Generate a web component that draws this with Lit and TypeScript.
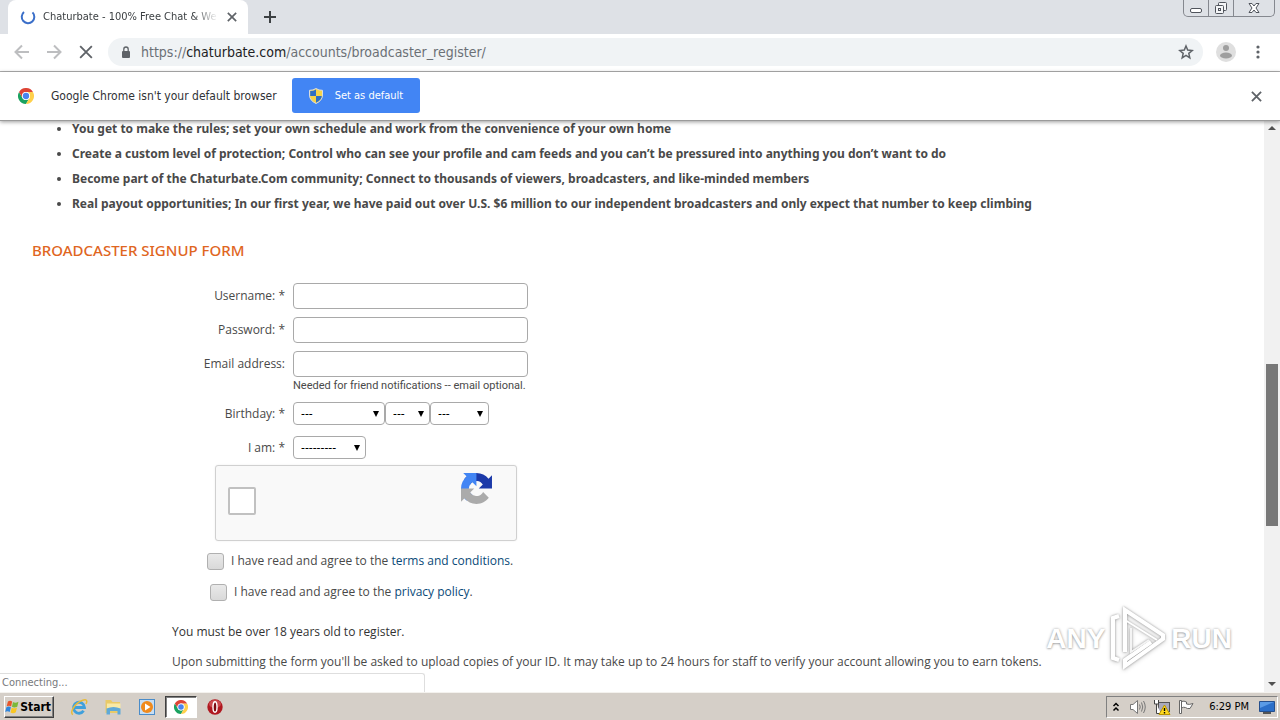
import { LitElement, html, css } from "lit";
import { customElement } from "lit/decorators.js";

const chromeLogo = (size: number) => html`
  <svg width=${size} height=${size} viewBox="0 0 48 48" aria-hidden="true">
    <path fill="#1aa260" d="M3.2 12A24 24 0 0 0 24 48L34.4 30A12 12 0 0 1 13.6 30Z" />
    <path fill="#ffd04b" d="M24 48A24 24 0 0 0 44.8 12H24A12 12 0 0 1 34.4 30Z" />
    <path fill="#de4435" d="M44.8 12A24 24 0 0 0 3.2 12L13.6 30A12 12 0 0 1 24 12Z" />
    <circle cx="24" cy="24" r="12" fill="#fff" />
    <circle cx="24" cy="24" r="9.5" fill="#4a84ee" />
  </svg>`;

const cross = (size: number, width: number) => html`
  <svg width=${size} height=${size} viewBox="0 0 12 12" fill="none" stroke="currentColor" stroke-width=${width} aria-hidden="true">
    <path d="M1 1L11 11M11 1L1 11" />
  </svg>`;

@customElement("browser-chrome")
class BrowserChrome extends LitElement {
  static styles = css`
    :host { display: block; font: 12px/16px "DejaVu Sans Condensed", "DejaVu Sans", sans-serif; color: #3c4043; }
    svg { display: block; }
    button { border: 0; background: none; padding: 0; margin: 0; color: inherit; font: inherit; display: grid; place-items: center; }
    .tabs { display: flex; height: 34px; padding-left: 8px; background: #dee1e6; }
    .tab { box-sizing: border-box; width: 240px; display: flex; align-items: center; background: #fff; border-radius: 8px 8px 0 0; padding: 0 10px 0 12px; }
    .title { flex: 1; min-width: 0; margin: 0 8px 0 7px; font-size: 11px; white-space: nowrap; overflow: hidden; -webkit-mask-image: linear-gradient(to right, #000 86%, transparent); mask-image: linear-gradient(to right, #000 86%, transparent); }
    .tab button { width: 12px; color: #5f6368; }
    .plus { width: 44px; color: #3c4043; }
    .window { display: flex; margin: 0 5px 0 auto; height: 16px; border: 1px solid #85888f; border-top: 0; border-radius: 0 0 5px 5px; }
    .window button { width: 24px; }
    .window button + button { width: 25px; border-left: 1px solid #85888f; }
    .window button:last-child { width: 41px; }
    .toolbar { display: flex; align-items: center; height: 36px; padding-bottom: 1px; border-bottom: 1px solid #b1b1b1; background: #fff; }
    .nav { display: flex; padding-left: 6px; }
    .nav button { width: 32px; color: #5f6368; }
    .nav button:disabled { color: #bdbec0; }
    .omnibox { flex: 1; display: flex; align-items: center; height: 28px; margin-left: 6px; padding: 0 9px 0 12px; border-radius: 14px; background: #f0f3f5; }
    .url { flex: 1; margin-left: 9px; font-size: 14px; color: #6b7075; outline: 0; white-space: nowrap; }
    .host { color: #202124; }
    .avatar { width: 46px; }
    .menu { width: 18px; margin-right: 13px; }
    .infobar { display: flex; align-items: center; height: 48px; padding: 0 18px; background: #fff; border-bottom: 1px solid #9a9a9a; box-shadow: 0 1px 4px #0006; position: relative; z-index: 2; color: #303236; }
    .msg { margin: 0 15px 0 17px; }
    .default { display: flex; align-items: center; gap: 12px; height: 35px; padding: 0 17px; background: #4285f4; color: #fff; border-radius: 3px; font-size: 11px; margin-bottom: 1px; }
    .close { margin-left: auto; color: #5f6368; }
  `;
  render() {
    return html`
      <div class="tabs">
        <div class="tab">
          <svg width="16" height="16" viewBox="0 0 16 16" fill="none" stroke="#3b6fc9" stroke-width="2"><path d="M4 3A6.3 6.3 0 1 0 12.5 3.4" /></svg>
          <span class="title">Chaturbate - 100% Free Chat &amp; We</span>
          <button aria-label="Close tab">${cross(10, 2)}</button>
        </div>
        <button class="plus" aria-label="New tab">
          <svg width="12" height="12" viewBox="0 0 12 12" stroke="currentColor" stroke-width="2"><path d="M6 0V12M0 6H12" /></svg>
        </button>
        <div class="window">
          <button aria-label="Minimize"><svg width="14" height="14" viewBox="0 0 14 14"><rect x="1.5" y="7.5" width="11" height="4" rx="1.5" fill="#fff" stroke="#50545c" /></svg></button>
          <button aria-label="Restore"><svg width="14" height="14" viewBox="0 0 14 14" fill="#f4f5f7" stroke="#50545c"><rect x="4.5" y="1.5" width="8" height="8" rx="1" /><rect x="1.5" y="4.5" width="8" height="8" rx="1" /><rect x="4.5" y="7.5" width="2" height="2" /></svg></button>
          <button aria-label="Close"><svg width="14" height="14" viewBox="0 0 14 14" fill="#fff" stroke="#50545c"><path d="M2 2.5H5L7 5L9 2.5H12L9 7L12 11.5H9L7 9L5 11.5H2L5 7Z" /></svg></button>
        </div>
      </div>
      <div class="toolbar">
        <div class="nav">
          <button disabled aria-label="Back"><svg width="16" height="16" viewBox="0 0 16 16" fill="none" stroke="currentColor" stroke-width="2"><path d="M15 8H2M8 1.5L1.5 8L8 14.5" /></svg></button>
          <button disabled aria-label="Forward"><svg width="16" height="16" viewBox="0 0 16 16" fill="none" stroke="currentColor" stroke-width="2"><path d="M1 8H14M8 1.5L14.5 8L8 14.5" /></svg></button>
          <button aria-label="Stop loading">${cross(14, 1.6)}</button>
        </div>
        <div class="omnibox">
          <svg width="12" height="12" viewBox="0 0 12 12"><rect x="2" y="5" width="8" height="7" rx="1" fill="#5f6368" /><path d="M3.8 5.5V3.2A2.2 2.2 0 0 1 8.2 3.2V5.5" fill="none" stroke="#5f6368" stroke-width="1.3" /></svg>
          <div class="url" role="textbox" aria-label="Address" contenteditable="true">https://<span class="host">chaturbate.com</span>/accounts/broadcaster_register/</div>
          <button aria-label="Bookmark this page"><svg width="16" height="16" viewBox="0 0 16 16" fill="none" stroke="#5f6368" stroke-width="1.5"><path d="M8 2L9.7 6.1L14.2 6.5L10.8 9.4L11.8 13.8L8 11.4L4.2 13.8L5.2 9.4L1.8 6.5L6.3 6.1Z" /></svg></button>
        </div>
        <button class="avatar" aria-label="Profile"><svg width="20" height="20" viewBox="0 0 20 20"><circle cx="10" cy="10" r="10" fill="#dfdfdf" /><circle cx="10" cy="6" r="3" fill="#9e9e9e" /><ellipse cx="10" cy="13.5" rx="6" ry="3" fill="#9e9e9e" /></svg></button>
        <button class="menu" aria-label="Menu"><svg width="4" height="14" viewBox="0 0 4 14" fill="#5f6368"><circle cx="2" cy="2" r="1.6" /><circle cx="2" cy="7" r="1.6" /><circle cx="2" cy="12" r="1.6" /></svg></button>
      </div>
      <div class="infobar">
        ${chromeLogo(16)}
        <span class="msg">Google Chrome isn't your default browser</span>
        <button class="default">
          <svg width="14" height="16" viewBox="0 0 14 16"><path d="M7 .5Q10 2.5 13.5 2.3V7Q13.5 12.5 7 15.5Q.5 12.5 .5 7V2.3Q4 2.5 7 .5Z" fill="#f6d449" stroke="#d9dde0" /><path d="M7 1.5V8H1.2V3Q4.5 3 7 1.5ZM7 8H12.8Q12.5 12 7 14.7Z" fill="#2f6fc4" /></svg>
          <span>Set as default</span>
        </button>
        <button class="close" aria-label="Dismiss">${cross(11, 2)}</button>
      </div>`;
  }
}

@customElement("signup-page")
class SignupPage extends LitElement {
  static styles = css`
    :host { display: flex; flex: 1; min-height: 0; overflow: hidden; position: relative; background: #fff; font: 12px/16px "Open Sans", "Noto Sans", sans-serif; color: #494949; }
    main { flex: 1; min-width: 0; overflow: hidden; padding-left: 32px; }
    ul { margin: -5px 0 0; padding: 0 0 0 40px; font: bold 12px/25px "Noto Sans", sans-serif; }
    li { white-space: nowrap; }
    h2 { margin: 24px 0 23px; font: 500 15px/20px "Noto Sans", sans-serif; color: #e0661f; }
    .row { display: grid; grid-template-columns: 253px 1fr; column-gap: 8px; align-items: center; margin-bottom: 8px; }
    .row > label { text-align: right; }
    .row > input { box-sizing: border-box; width: 235px; height: 26px; border: 1px solid #a9a9a9; border-radius: 4px; padding: 2px 6px; margin: 0; font: inherit; background: #fff; }
    .help { grid-column: 2; font: 11px/17px Roboto, sans-serif; }
    .selects { display: flex; }
    .pick { display: grid; align-items: center; }
    .pick::after { content: ""; grid-area: 1 / 1; justify-self: end; margin-right: 6px; border: 3px solid transparent; border-top: 6px solid #000; border-bottom: 0; pointer-events: none; }
    select { grid-area: 1 / 1; appearance: none; box-sizing: border-box; height: 23px; border: 1px solid #a9a9a9; border-radius: 4px; padding: 0 7px; margin: 0; background: #fff; color: #000; font: 12px/16px "DejaVu Sans Condensed", "DejaVu Sans", sans-serif; }
    .month { width: 92px; }
    .day { width: 45px; }
    .year { width: 59px; }
    .gender { width: 73px; }
    .row.last { margin: 11px 0 6px; }
    .captcha { box-sizing: border-box; width: 302px; height: 76px; margin-left: 183px; padding: 7px 24px 0 12px; display: flex; justify-content: space-between; background: #f9f9f9; border: 1px solid #d0d0d0; border-radius: 3px; box-shadow: 0 0 2px #00000014; }
    .captcha input { appearance: none; box-sizing: border-box; width: 28px; height: 28px; margin: 14px 0 0; border: 2px solid #c1c1c1; border-radius: 2px; background: #fff; }
    .agree { display: flex; align-items: center; gap: 7px; margin: 11px 0 0 175px; height: 18px; }
    .agree + .agree { margin: 13px 0 0 178px; }
    .agree input { appearance: none; box-sizing: border-box; width: 17px; height: 17px; margin: 0; border: 1px solid #b0b0b0; border-radius: 3px; background: linear-gradient(#e9e9e9, #d9d9d9); }
    a { color: #0a4a78; text-decoration: none; }
    p { margin: 14px 0 0 140px; white-space: nowrap; }
    .adult { margin-top: 23px; font-weight: 500; color: #333; }
    .scroll { width: 16px; display: flex; flex-direction: column; align-items: center; background: #f1f1f1; }
    .scroll svg { flex: none; display: block; }
    .above { flex: 226; }
    .thumb { flex: 162; width: 12px; background: #787878; }
    .below { flex: 149; }
    .status { position: absolute; left: 0; bottom: 0; box-sizing: border-box; width: 425px; height: 19px; padding-left: 2px; background: #fff; border: 1px solid #dedede; border-width: 1px 1px 0 0; border-radius: 0 3px 0 0; font: 11px/18px "DejaVu Sans Condensed", sans-serif; color: #77797c; }
    .mark { position: absolute; right: 48px; bottom: 20px; display: flex; align-items: center; gap: 4px; font: bold 28px/20px "Liberation Sans", sans-serif; color: #fff; text-shadow: 0 0 3px #0005, 0 1px 2px #0003; pointer-events: none; }
    .mark svg { display: block; filter: drop-shadow(0 0 1px #0005) drop-shadow(0 1px 2px #0003); }
  `;
  render() {
    const items = [
      "You get to make the rules; set your own schedule and work from the convenience of your own home",
      "Create a custom level of protection; Control who can see your profile and cam feeds and you can’t be pressured into anything you don’t want to do",
      "Become part of the Chaturbate.Com community; Connect to thousands of viewers, broadcasters, and like-minded members",
      "Real payout opportunities; In our first year, we have paid out over U.S. $6 million to our independent broadcasters and only expect that number to keep climbing",
    ];
    const pick = (name: string, label: string, dashes: string) => html`
      <span class="pick"><select class=${name} id=${name} aria-label=${label}><option>${dashes}</option></select></span>`;
    const arrow = (d: string) => html`<svg width="16" height="17" viewBox="0 0 16 17" aria-hidden="true"><path d=${d} fill="#505050" /></svg>`;
    return html`
      <main>
        <ul>${items.map((t) => html`<li>${t}</li>`)}</ul>
        <h2>BROADCASTER SIGNUP FORM</h2>
        <form>
          <div class="row"><label for="user">Username: *</label><input id="user" type="text" /></div>
          <div class="row"><label for="pass">Password: *</label><input id="pass" type="password" /></div>
          <div class="row"><label for="mail">Email address:</label><input id="mail" type="email" />
            <span class="help">Needed for friend notifications -- email optional.</span></div>
          <div class="row"><label for="month">Birthday: *</label>
            <div class="selects">${pick("month", "Month", "---")}${pick("day", "Day", "---")}${pick("year", "Year", "---")}</div></div>
          <div class="row last"><label for="gender">I am: *</label><div class="selects">${pick("gender", "I am", "---------")}</div></div>
          <div class="captcha">
            <input type="checkbox" aria-label="reCAPTCHA" />
            <svg width="31" height="31" viewBox="0 0 64 64" aria-hidden="true">
              <path fill="#1c3aa9" d="M64 31.955l-.033-1.37V4.687l-7.16 7.16C50.948 4.674 42.033.093 32.05.093c-10.4 0-19.622 4.96-25.458 12.64l11.736 11.86a15.55 15.55 0 0 1 4.754-5.334c2.05-1.6 4.952-2.906 8.968-2.906.485 0 .86.057 1.135.163 4.976.393 9.288 3.14 11.828 7.124l-8.307 8.307L64 31.953" />
              <path fill="#4285f4" d="M31.862.094l-1.37.033H4.594l7.16 7.16C4.58 13.147 0 22.06 0 32.046c0 10.4 4.96 19.622 12.64 25.458L24.5 45.768a15.55 15.55 0 0 1-5.334-4.754c-1.6-2.05-2.906-4.952-2.906-8.968 0-.485.057-.86.163-1.135.393-4.976 3.14-9.288 7.124-11.828l8.307 8.307L31.86.095" />
              <path fill="#ababab" d="M.001 32.045l.033 1.37v25.898l7.16-7.16c5.86 7.173 14.774 11.754 24.76 11.754 10.4 0 19.622-4.96 25.458-12.64l-11.736-11.86a15.55 15.55 0 0 1-4.754 5.334c-2.05 1.6-4.952 2.906-8.968 2.906-.485 0-.86-.057-1.135-.163-4.976-.393-9.288-3.14-11.828-7.124l8.307-8.307c-10.522.04-22.4.066-27.295-.005" />
            </svg>
          </div>
          <div class="agree"><input type="checkbox" id="terms" /><label for="terms">I have read and agree to the <a href="#terms">terms and conditions</a>.</label></div>
          <div class="agree"><input type="checkbox" id="privacy" /><label for="privacy">I have read and agree to the <a href="#privacy">privacy policy</a>.</label></div>
          <p class="adult">You must be over 18 years old to register.</p>
          <p>Upon submitting the form you'll be asked to upload copies of your ID. It may take up to 24 hours for staff to verify your account allowing you to earn tokens.</p>
        </form>
      </main>
      <div class="scroll">
        ${arrow("M4 9H12L8 5Z")}<div class="above"></div><div class="thumb"></div><div class="below"></div>${arrow("M4 7H12L8 11Z")}
      </div>
      <div class="status">Connecting...</div>
      <div class="mark"><span>ANY</span>
        <svg width="58" height="66" viewBox="0 0 58 66" fill="none" stroke="#fff" stroke-width="4">
          <path d="M16 46V4L54 29V33L16 60V54L42 36" /><path d="M10 10L4 12V52L10 54" /><path d="M16 14L48 34" stroke-width="2" /><path d="M22 22V46L40 34" stroke="#f4f4f4" stroke-width="2" />
        </svg>
        <span>RUN</span></div>`;
  }
}

@customElement("task-bar")
class TaskBar extends LitElement {
  static styles = css`
    :host { box-sizing: border-box; display: flex; align-items: center; height: 28px; padding: 3px 2px 2px 4px; background: #d5cfc8; border-top: 1px solid #f4f2ee; font: 11px/16px "DejaVu Sans Condensed", "DejaVu Sans", sans-serif; color: #000; }
    svg { display: block; }
    button { box-sizing: border-box; border: 0; background: none; padding: 0; margin: 0; width: 34px; height: 22px; display: grid; place-items: center; }
    .start { display: flex; align-items: center; gap: 1px; width: 50px; padding: 0 2px 0 0; font: bold 12px/16px "DejaVu Sans Condensed", sans-serif; color: #000; border: 1px solid; border-color: #fff #404040 #404040 #fff; box-shadow: inset -1px -1px #808080; margin-right: 8px; }
    .active { width: 32px; background: #fff; border: 1px solid; border-color: #404040 #fff #fff #404040; box-shadow: inset 1px 1px #808080; margin: 0 1px; }
    .tray { box-sizing: border-box; display: flex; align-items: center; height: 22px; margin-left: auto; padding: 0 1px 0 5px; border: 1px solid; border-color: #808080 #fff #fff #808080; }
    .tray button { width: 24px; }
    .tray .more { width: 8px; margin-right: 6px; }
    .tray .desk { width: 18px; }
    time { margin: 0 9px 0 11px; }
  `;
  render() {
    return html`
      <button class="start"><svg width="17" height="16" viewBox="0 0 17 16">
        <path fill="#e8562a" d="M3.5 1.5Q6 -.5 8.5 1.5L7.3 7.3Q4.8 5.5 2 7.2Z" /><path fill="#7cb83a" d="M9.5 2Q12 4 16 1.8L14.6 7.6Q11 9.5 8.3 7.7Z" />
        <path fill="#2f86dd" d="M1.7 8.2Q4.6 6.5 7 8.3L5.6 14Q3 12 .2 14Z" /><path fill="#f9c623" d="M8 8.8Q10.8 10.5 14.3 8.6L12.9 14.2Q9.8 16.3 6.6 14.5Z" /></svg>Start</button>
      <button aria-label="Internet Explorer"><svg width="18" height="18" viewBox="0 0 18 18" fill="none">
        <path d="M4.5 9.5H14.5A5.5 5.5 0 1 0 13.6 12.8" stroke="#3fa0dc" stroke-width="2.8" /><path d="M3 16.5C-1 15 5 5 12 2.5C17 .5 17.5 3 16 6" stroke="#e8bb3a" stroke-width="1.5" /></svg></button>
      <button aria-label="Windows Explorer"><svg width="18" height="18" viewBox="0 0 18 18"><path d="M1.5 2H7L8.500 4H16V15H1.5Z" fill="#e9ca68" /><path d="M3 5.500H16.5V11H3Z" fill="#f8e9a6" /><path d="M2.500 16.5V10.5Q9.500 7.5 16.5 10.5V16.5H13.5V13H6V16.5Z" fill="#5fa9d8" /></svg></button>
      <button aria-label="Media Player"><svg width="18" height="18" viewBox="0 0 18 18"><rect x="1.5" y="1.5" width="15" height="15" fill="#c7def3" stroke="#4a8cc9" /><circle cx="9" cy="9" r="6" fill="#f08a1c" /><path d="M7 5.5V12.5L12.5 9Z" fill="#fff" /></svg></button>
      <button class="active" aria-label="Google Chrome">${chromeLogo(14)}</button>
      <button aria-label="Opera"><svg width="16" height="16" viewBox="0 0 16 16"><circle cx="8" cy="8" r="7.7" fill="#b01820" /><ellipse cx="8" cy="5" rx="6" ry="4" fill="#cc4a4e" /><ellipse cx="8" cy="8" rx="2" ry="5.2" fill="#7d0a10" stroke="#fff" stroke-width="1.4" /></svg></button>
      <div class="tray">
        <button class="more" aria-label="Show hidden icons"><svg width="8" height="12" viewBox="0 0 8 12" fill="none" stroke="#000" stroke-width="1.5"><path d="M1.5 5L4 2.5L6.5 5M1.5 9.5L4 7L6.5 9.5" /></svg></button>
        <button aria-label="Volume"><svg width="18" height="16" viewBox="0 0 18 16" fill="none" stroke="#777"><path d="M1.5 5.5H4L8.5 1.5V14.5L4 10.5H1.5Z" fill="#fff" /><path d="M10.5 5.5Q12 8 10.5 10.5M12.5 3.5Q15 8 12.5 12.5M14.5 2Q18 8 14.5 14" /></svg></button>
        <button aria-label="Network"><svg width="18" height="16" viewBox="0 0 18 16"><rect x="5.5" y="3.5" width="11" height="9" fill="#aab" stroke="#555" /><path d="M1.5 1V5H5.5V1M3.5 5V14.5H8" fill="#fff" stroke="#444" /><path d="M11.5 6L17 15.5H6Z" fill="#ffd91e" stroke="#b89400" /><path d="M11.5 9V12M11.5 13V14.5" stroke="#000" stroke-width="1.4" /></svg></button>
        <button aria-label="Action Center"><svg width="18" height="16" viewBox="0 0 18 16" fill="#fff" stroke="#666"><path d="M2.5 1.5H4.5V14.5H2.5ZM4.5 2.5Q7 1.5 9.5 3V5Q12 6 16 4.5L13 9.5Q10 10 8.5 8.5Q6.5 7.8 4.5 9Z" /></svg></button>
        <time>6:29 PM</time>
        <button class="desk" aria-label="Show desktop"><svg width="18" height="16" viewBox="0 0 18 16"><path d="M1.5 2.5H16.5V12.5H1.5Z" fill="#2b6fc9" stroke="#254f8d" /><path d="M2 3H16L2 9Z" fill="#5a9be6" /><path d="M5 14H13" stroke="#555" stroke-width="2" /></svg></button>
      </div>`;
  }
}

@customElement("app-root")
class AppRoot extends LitElement {
  static styles = css`
    :host { display: flex; flex-direction: column; height: 100vh; overflow: hidden; }
    browser-chrome, task-bar { flex: none; }
  `;
  render() {
    return html`<browser-chrome></browser-chrome><signup-page></signup-page><task-bar></task-bar>`;
  }
}
